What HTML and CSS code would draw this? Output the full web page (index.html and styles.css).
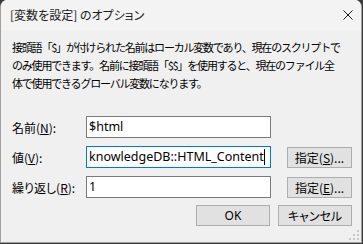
FILE: index.html
```html
<!DOCTYPE html>
<html lang="ja">
<head>
    <meta charset="UTF-8">
    <title>[変数を設定] のオプション</title>
    <link rel="stylesheet" href="styles.css">
</head>
<body>
    <div class="dialog">
        <!-- Title bar -->
        <div class="titlebar">
            <span class="title">[変数を設定] のオプション</span>
            <svg class="close" width="10" height="10" viewBox="0 0 10 10">
                <path d="M0.5 0.5 L9.5 9.5 M9.5 0.5 L0.5 9.5" stroke="#1a1a1a" stroke-width="1" fill="none"/>
            </svg>
        </div>

        <div class="content">
            <p class="desc">
                接頭語「$」が付けられた名前はローカル変数であり、現在のスクリプトで<br>
                のみ使用できます。名前に接頭語「$$」を使用すると、現在のファイル全<br>
                体で使用できるグローバル変数になります。
            </p>

            <div class="form">
                <label class="label">名前(<u>N</u>):</label>
                <div class="field">$html</div>
                <div></div>

                <label class="label">値(<u>V</u>):</label>
                <div class="field focused">knowledgeDB::HTML_Content<span class="caret"></span></div>
                <button class="btn pick">指定(<u>S</u>)...</button>

                <label class="label">繰り返し(<u>R</u>):</label>
                <div class="field">1</div>
                <button class="btn pick">指定(<u>E</u>)...</button>
            </div>

            <div class="actions">
                <button class="btn wide ok">OK</button>
                <button class="btn wide">キャンセル</button>
            </div>
        </div>

        <!-- resize grip -->
        <svg class="grip" width="10" height="10" viewBox="0 0 10 10">
            <rect x="8" y="0" width="2" height="2" fill="#c8c8c8"/>
            <rect x="4" y="4" width="2" height="2" fill="#c8c8c8"/>
            <rect x="8" y="4" width="2" height="2" fill="#c8c8c8"/>
            <rect x="0" y="8" width="2" height="2" fill="#c8c8c8"/>
            <rect x="4" y="8" width="2" height="2" fill="#c8c8c8"/>
            <rect x="8" y="8" width="2" height="2" fill="#c8c8c8"/>
        </svg>
    </div>
</body>
</html>
```

FILE: styles.css
```css
/* Base */
* {
    box-sizing: border-box;
    margin: 0;
    padding: 0;
}

body {
    background: #3a3a3a;
    font-family: "Noto Sans", "Noto Sans CJK JP", sans-serif;
    font-size: 12px;
    color: #000;
}

/* Window frame */
.dialog {
    position: relative;
    width: 362px;
    height: 243px;
    background: #f0f0f0;
    border: 1px solid #a0a0a0;
    border-top: none;
    border-radius: 7px 7px 0 0;
    overflow: hidden;
}

.titlebar {
    height: 31px;
    display: flex;
    align-items: center;
    justify-content: space-between;
    padding: 0 8px 2px 9px;
    background: #f3f3f3;
}

.title {
    font-family: "Noto Sans CJK JP", sans-serif;
    font-feature-settings: "palt";
    font-size: 12px;
    color: #1a1a1a;
}

.close {
    display: block;
}

.content {
    padding: 7px 9px 0 11px;
}

/* Description text - full-width glyphs at ~9.8px advance */
.desc {
    font-family: "Noto Sans CJK JP", sans-serif;
    font-size: 11px;
    letter-spacing: -1.2px;
    line-height: 18px;
    height: 54px;
    white-space: nowrap;
}

/* Form grid */
.form {
    display: grid;
    grid-template-columns: 74px 185px 1fr;
    row-gap: 8px;
    align-items: center;
    margin-top: 24px;
}

.label {
    font-family: "Noto Sans CJK JP", sans-serif;
    font-feature-settings: "palt";
    font-size: 12px;
}

.field {
    height: 22px;
    border: 1px solid #7a7a7a;
    background: #fff;
    padding: 0 2px;
    line-height: 20px;
    font-size: 12.5px;
    white-space: nowrap;
    overflow: hidden;
}

.field.focused {
    border-color: #0078d7;
}

.caret {
    display: inline-block;
    width: 1px;
    height: 16px;
    background: #000;
    vertical-align: -4px;
}

/* Buttons */
.btn {
    height: 21px;
    background: #e1e1e1;
    border: 1px solid #adadad;
    font-family: "Noto Sans CJK JP", sans-serif;
    font-feature-settings: "palt";
    font-size: 12px;
    color: #000;
}

.btn.pick {
    width: 65px;
    justify-self: end;
}

.actions {
    display: flex;
    justify-content: flex-end;
    gap: 8px;
    margin-top: 7px;
}

.btn.wide {
    width: 74px;
}

.btn.ok {
    font-family: "Noto Sans", sans-serif;
}

.grip {
    position: absolute;
    right: 2px;
    bottom: 2px;
}
```
